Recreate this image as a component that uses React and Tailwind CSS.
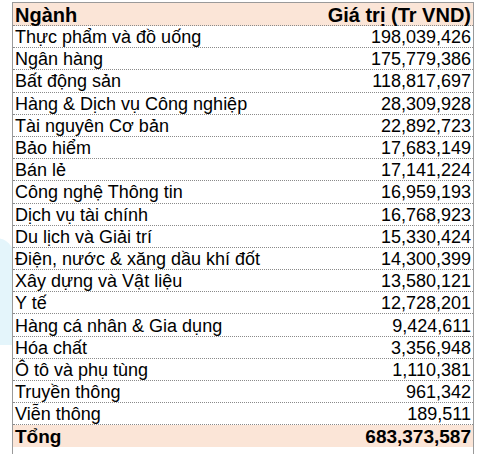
const rows = [
  ['Thực phẩm và đồ uống', '198,039,426'],
  ['Ngân hàng', '175,779,386'],
  ['Bất động sản', '118,817,697'],
  ['Hàng & Dịch vụ Công nghiệp', '28,309,928'],
  ['Tài nguyên Cơ bản', '22,892,723'],
  ['Bảo hiểm', '17,683,149'],
  ['Bán lẻ', '17,141,224'],
  ['Công nghệ Thông tin', '16,959,193'],
  ['Dịch vụ tài chính', '16,768,923'],
  ['Du lịch và Giải trí', '15,330,424'],
  ['Điện, nước & xăng dầu khí đốt', '14,300,399'],
  ['Xây dựng và Vật liệu', '13,580,121'],
  ['Y tế', '12,728,201'],
  ['Hàng cá nhân & Gia dụng', '9,424,611'],
  ['Hóa chất', '3,356,948'],
  ['Ô tô và phụ tùng', '1,110,381'],
  ['Truyền thông', '961,342'],
  ['Viễn thông', '189,511'],
]

export default function App() {
  return (
    <div className="relative w-[500px] h-[454px] bg-white overflow-hidden font-['Liberation_Sans',Arial,sans-serif] text-black">
      {/* faint watermark at the left edge */}
      <div className="absolute left-[-40px] top-[238px] w-[54px] h-[107px] rounded-tr-[18px] bg-[#e4f5fb]" />

      <div className="relative ml-[12px] mt-[2px] w-[462px] h-[460px] border-l border-r border-t border-[#9a9a9a] bg-white">
        <div className="flex items-center justify-between h-[23px] px-[2px] pt-[2px] bg-[#fbe5d7] border-b border-dotted border-[#8a8a8a] text-[20px] font-bold leading-none">
          <span>Ngành</span>
          <span>Giá trị (Tr VND)</span>
        </div>
        {rows.map(([name, value]) => (
          <div
            key={name}
            className="flex items-center justify-between h-[22.2px] px-[2px] pt-[1px] border-b border-dotted border-[#8a8a8a] text-[18px] leading-none"
          >
            <span>{name}</span>
            <span>{value}</span>
          </div>
        ))}
        <div className="flex items-center justify-between h-[22px] px-[2px] pt-[1px] bg-[#fbe5d7] text-[19px] font-bold leading-none">
          <span>Tổng</span>
          <span>683,373,587</span>
        </div>
      </div>
    </div>
  )
}
